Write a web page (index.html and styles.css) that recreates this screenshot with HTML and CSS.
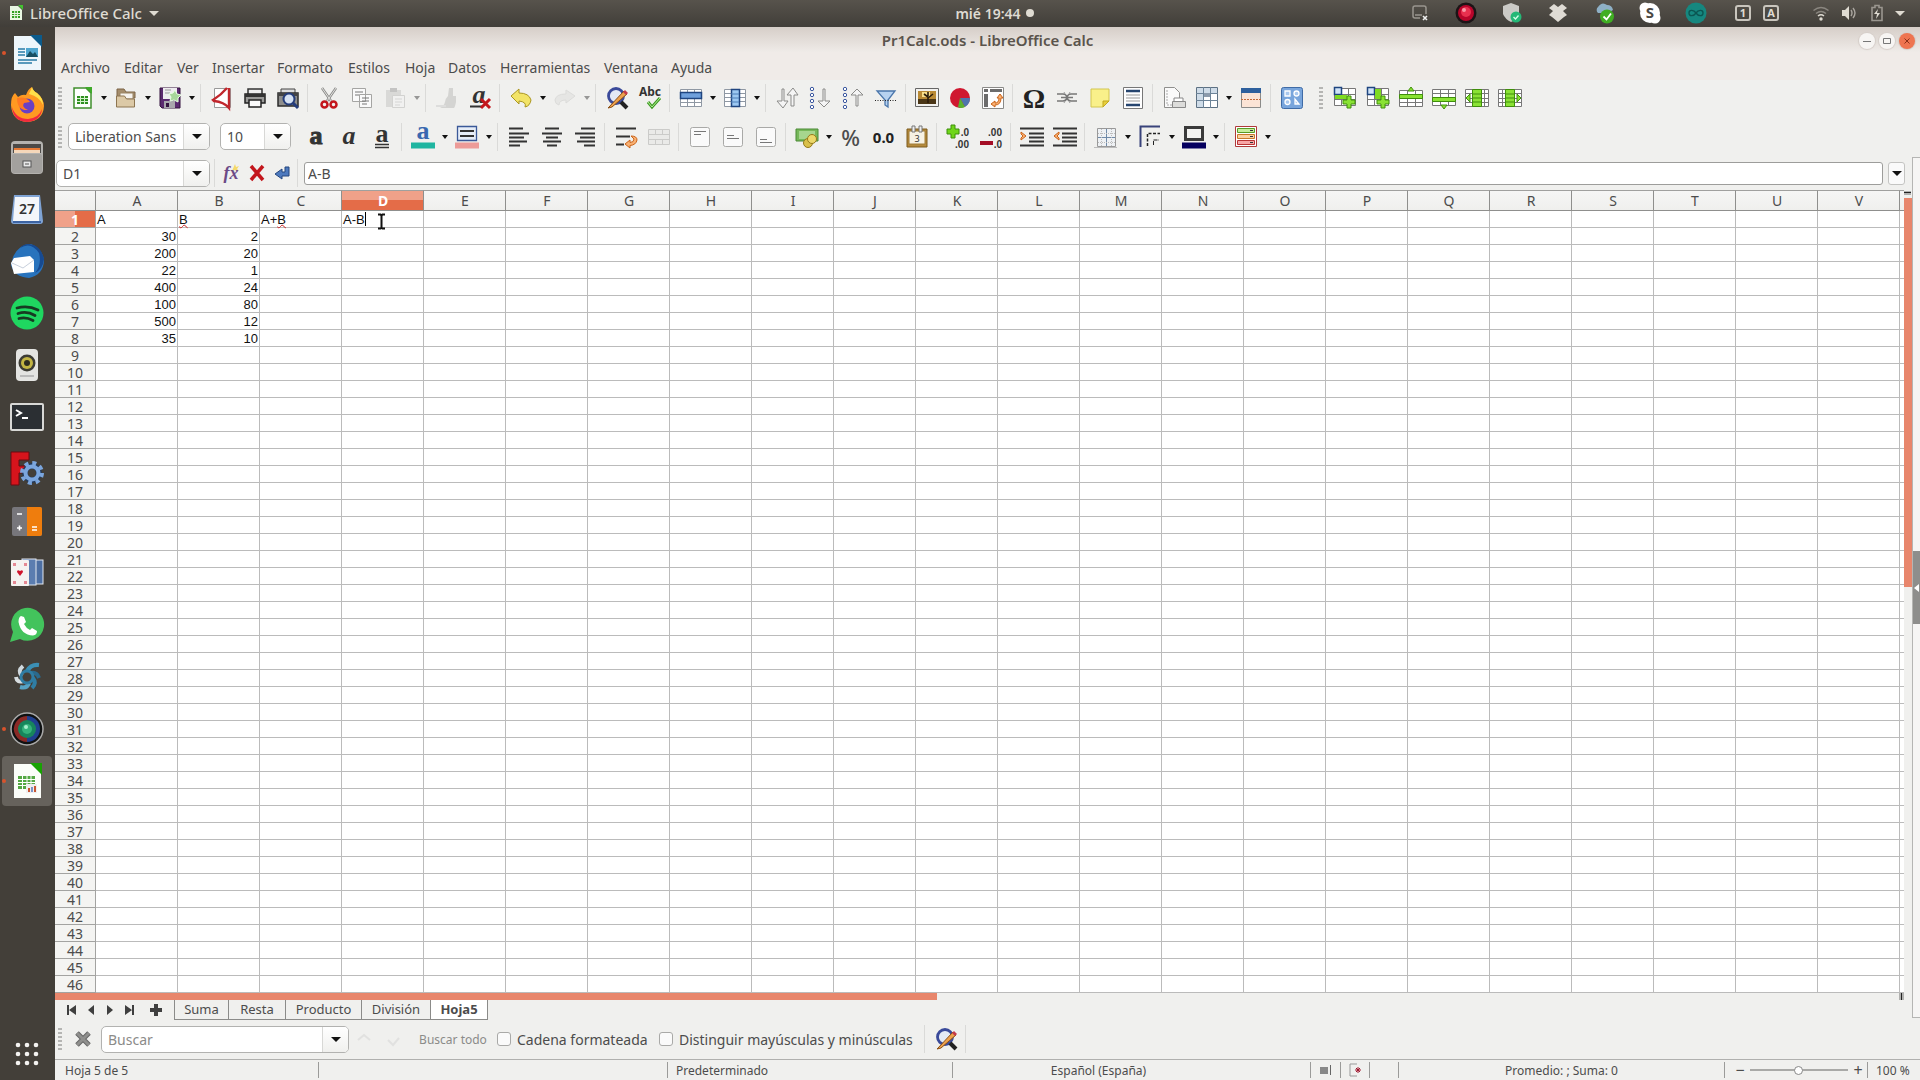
FILE: index.html
```html
<!DOCTYPE html>
<html lang="es">
<head>
    <meta charset="UTF-8">
    <meta name="viewport" content="width=device-width, initial-scale=1.0">
    <title>Pr1Calc.ods - LibreOffice Calc</title>
    <link rel="stylesheet" href="styles.css">
</head>
<body>
    <header class="topbar">
        <button class="app-menu">
            <svg width="14" height="16" viewBox="0 0 14 16"><path d="M1 1h8l4 4v10H1z" fill="#e9f7e3"/><path d="M9 0h5v5z" fill="#43c330"/><path d="M3 6h8v7H3z" fill="#2f9e1f"/><path d="M3 8.500h8M3 10.500h8M5.700 6v7M8.400 6v7" stroke="#e9f7e3"/></svg>
            LibreOffice Calc
            <span class="caret light"></span>
        </button>
        <div class="clock">mié 19:44 <span class="dot"></span></div>
        <div class="tray">
            <span class="slot"><svg width="18" height="18" viewBox="0 0 18 18"><path d="M9 14H4a2 2 0 0 1-2-2V4a2 2 0 0 1 2-2h9a2 2 0 0 1 2 2v6M4 11h7" fill="none" stroke="#99958e" stroke-width="1.500"/><path d="M12 12l4 4m0-4l-4 4" stroke="#eee" stroke-width="1.600"/></svg></span>
            <span class="slot"><svg width="22" height="22" viewBox="0 0 22 22"><circle cx="11" cy="11" r="10.500" fill="#1c1416"/><circle cx="11" cy="11" r="8" fill="#b8062b"/><circle cx="11" cy="10" r="5" fill="#e8304f"/><circle cx="9" cy="8" r="2" fill="#f799a8"/></svg></span>
            <span class="slot"><svg width="22" height="22" viewBox="0 0 22 22"><path d="M2 4l8-3 8 3v8q-2 6-8 8-6-3-8-8z" fill="#cbcac6"/><circle cx="15" cy="15" r="5.500" fill="#25b877"/><path d="M12.500 15l2 2 3-3.500" fill="none" stroke="#d6ffe9" stroke-width="1.300"/></svg></span>
            <span class="slot"><svg width="20" height="20" viewBox="0 0 20 20"><path d="M6 1l4 3 4-3 5 4-4 3 4 4-3 2-6 5-6-5-3-2 4-4-4-3z" fill="#dfdbd4"/></svg></span>
            <span class="slot"><svg width="22" height="22" viewBox="0 0 22 22"><path d="M5 11a4 4 0 0 1 0-6q4-6 9-2 5 0 6 5l-5 3z" fill="#8eb0c6"/><circle cx="14" cy="14.500" r="7" fill="#3fae22"/><path d="M10.500 14.500l3 3 4.500-6" fill="none" stroke="#fff" stroke-width="1.800"/></svg></span>
            <span class="slot"><svg width="22" height="22" viewBox="0 0 22 22"><circle cx="11" cy="11" r="10" fill="#fff"/><circle cx="6" cy="6" r="5.500" fill="#fff"/><circle cx="16" cy="16" r="5.500" fill="#fff"/><text x="11" y="16" text-anchor="middle" class="t-skype">S</text></svg></span>
            <span class="slot"><svg width="22" height="22" viewBox="0 0 22 22"><circle cx="11" cy="11" r="10.500" fill="#16877f"/><path d="M11 11c-2-3-7-4-7 0s5 3 7 0 7-4 7 0-5 3-7 0" fill="none" stroke="#0b5652" stroke-width="1.400"/></svg></span>
            <span class="slot narrow"><span class="keybox">1</span></span>
            <span class="slot narrow"><span class="keybox">A</span></span>
            <span class="slot narrow gap"><svg width="18" height="16" viewBox="0 0 18 16"><path d="M1.500 5.500q7.500-6 15 0M4 8.500q5-4 10 0" fill="none" stroke="#8b8780" stroke-width="1.500"/><path d="M6 11q3-2.500 6 0" fill="none" stroke="#dfdbd2" stroke-width="1.500"/><circle cx="9" cy="14" r="1.700" fill="#dfdbd2"/></svg></span>
            <span class="slot narrow"><svg width="16" height="16" viewBox="0 0 16 16"><path d="M1 5h3l4-4v14l-4-4H1z" fill="#dfdbd2"/><path d="M10 5q2 3 0 6M12 3q4 5 0 10" fill="none" stroke="#aaa69f" stroke-width="1.400"/></svg></span>
            <span class="slot narrow"><svg width="14" height="18" viewBox="0 0 14 18"><path d="M5 1.500h4v2h3v13H2v-13h3z" fill="none" stroke="#9a968f" stroke-width="1.600"/><path d="M8 5l-4 5h3l-1 5 4-6H7z" fill="#dfdbd2"/></svg></span>
            <span class="caret light"></span>
        </div>
    </header>

    <div class="desktop">
        <nav class="dock">
            <button class="dock-item running" aria-label="Writer"><svg viewBox="0 0 36 36"><path d="M5 1h18l9 9v25H5z" fill="#eef6fb"/><path d="M21 0h12v12z" fill="#0b5b8c"/><path d="M9 14h7M9 17h7M9 20h7M9 25h19M9 28h14" stroke="#2a7ca8" stroke-width="1.500"/><path d="M17 13h12v9H17z" fill="#4fa6cf"/><path d="M17 22l4-6 3 3 2-2 3 5z" fill="#174f63"/></svg></button>
            <button class="dock-item" aria-label="Firefox"><svg viewBox="0 0 36 36"><path d="M2 18Q2 9 6 6l3 4q4-3 8-2 2-6 6-8 1 4 5 6 7 6 7 13-1 15-17 16Q3 34 2 18z" fill="#ff9a22"/><path d="M3 20q4 12 16 12 11-1 14-10-1 12-15 13Q4 34 3 20z" fill="#f1293f"/><path d="M20 7q2-4 3-7 1 4 5 6 6 5 6 12-3-8-14-11z" fill="#ffe04a"/><circle cx="18" cy="19" r="7.500" fill="#6a3fc4"/><path d="M8 11q9-2 13 4l-6 1q-3 4 4 7-11 1-11-12z" fill="#ff7a22"/></svg></button>
            <button class="dock-item" aria-label="Archivos"><svg viewBox="0 0 36 36"><rect x="2" y="2" width="32" height="33" rx="4" fill="#b4b2af"/><path d="M4 5h28v9H4z" fill="#4c4946"/><path d="M5 9h26v5H5z" fill="#e77a35"/><path d="M5 11h26v3H5z" fill="#f5d7ba"/><rect x="3" y="15" width="30" height="19" rx="2" fill="#a3a19e"/><rect x="14" y="22" width="8" height="6" fill="#e8e8e8" stroke="#555"/><path d="M16 25h4" stroke="#555"/></svg></button>
            <button class="dock-item" aria-label="Calendario"><svg viewBox="0 0 36 36"><path d="M5 4h26l3 26q0 3-3 3H5q-3 0-3-3z" fill="#7fa3d4"/><path d="M6 6h24v24H4z" fill="#f4f6fa"/><path d="M4 30h28v2H4z" fill="#3d64a3"/><text x="18" y="23" text-anchor="middle" class="t-day">27</text></svg></button>
            <button class="dock-item" aria-label="Thunderbird"><svg viewBox="0 0 36 36"><path d="M4 14Q10 1 22 1q12 5 13 17-1 14-15 17Q5 34 2 22z" fill="#2873bd"/><path d="M11 5Q22-2 30 10q3 12-4 20 8-4 9-14Q32 2 20 1q-6 0-9 4z" fill="#174a91"/><path d="M2 20l3-5 16-2 4 4v12l-20 2z" fill="#fff"/><path d="M3 20l11 5 11-8" fill="none" stroke="#c8d0dc"/></svg></button>
            <button class="dock-item" aria-label="Spotify"><svg viewBox="0 0 36 36"><circle cx="18" cy="18" r="16.500" fill="#1fd760"/><path d="M8 13q11-3 21 2M9 18.500q9-3 17 2M10 23.500q7-2 14 2" fill="none" stroke="#173a22" stroke-width="2.800" stroke-linecap="round"/></svg></button>
            <button class="dock-item" aria-label="Rhythmbox"><svg viewBox="0 0 36 36"><rect x="7" y="2" width="22" height="32" rx="4" fill="#e4e4e2"/><circle cx="18" cy="16" r="8.500" fill="#3c3b34"/><circle cx="18" cy="16" r="6" fill="#c2b443"/><circle cx="18" cy="16" r="3" fill="#2d2b20"/><path d="M11 29h14" stroke="#bbb" stroke-width="2"/></svg></button>
            <button class="dock-item" aria-label="Terminal"><svg viewBox="0 0 36 36"><rect x="1" y="4" width="34" height="28" rx="2" fill="#d8d8d6"/><rect x="3" y="6" width="30" height="24" fill="#2b2f33"/><path d="M7 11l5 3-5 3M13 19h6" fill="none" stroke="#fff" stroke-width="2"/></svg></button>
            <button class="dock-item" aria-label="FreeCAD"><svg viewBox="0 0 36 36"><path d="M2 1h18v8H10v6h8v7h-8v12H2z" fill="#d6141c" stroke="#6b0b10"/><circle cx="23" cy="22" r="7" fill="none" stroke="#223a5c" stroke-width="6"/><circle cx="23" cy="22" r="10" fill="none" stroke="#7ba6de" stroke-width="4" stroke-dasharray="4 3.850"/><circle cx="23" cy="22" r="6.500" fill="none" stroke="#7ba6de" stroke-width="4"/></svg></button>
            <button class="dock-item" aria-label="Calculadora"><svg viewBox="0 0 36 36"><rect x="3" y="4" width="30" height="29" rx="2" fill="#77767b"/><path d="M18 4h13q2 0 2 2v25q0 2-2 2H18z" fill="#ef7d0d"/><path d="M8 11h5M8 25h5M10.500 22.500v5M23 24h5M23 27h5" stroke="#fff" stroke-width="1.600"/></svg></button>
            <button class="dock-item" aria-label="Solitario"><svg viewBox="0 0 36 36"><rect x="20" y="5" width="14" height="24" fill="#4d6fa3" stroke="#e3e8ef"/><rect x="13" y="4" width="14" height="26" fill="#5b7db0" stroke="#e3e8ef"/><rect x="2" y="5" width="18" height="26" rx="1" fill="#f4f2f0"/><path d="M11 21l-3-4q0-3 3-1 3-2 3 1z" fill="#d0142c"/><path d="M4 8h3v3H4zM15 8h3v3h-3zM4 26h3v3H4zM15 26h3v3h-3z" fill="#e48894"/></svg></button>
            <button class="dock-item" aria-label="WhatsApp"><svg viewBox="0 0 36 36"><path d="M1 35l3-10A16.500 16.500 0 1 1 11 32z" fill="#43c35c"/><path d="M12 9l3 1 2 5-2 2q2 4 6 6l2-2 5 3q0 4-4 4.500Q12 28 9.500 15q0-5 2.500-6z" fill="#fff"/></svg></button>
            <button class="dock-item" aria-label="Shutter"><svg viewBox="0 0 36 36"><g fill="none" stroke-width="4"><path d="M18 12Q22 5 30 6" stroke="#3b8fb4"/><path d="M22 14q6-1 8 5" stroke="#2a6a8d"/><path d="M24 19q4 5-1 10" stroke="#2f7da4"/><path d="M20 24q-2 6-9 4" stroke="#57a3c4"/><path d="M14 22q-6 2-7-4" stroke="#d7dde0"/><path d="M13 17Q8 12 14 7" stroke="#cfd8dd"/></g><circle cx="18" cy="18" r="6" fill="none" stroke="#2f7da4" stroke-width="3"/></svg></button>
            <button class="dock-item running" aria-label="Cámara"><svg viewBox="0 0 36 36"><circle cx="18" cy="18" r="16" fill="#0f1112" stroke="#aaa" stroke-width="1.500"/><path d="M7 11a13 13 0 0 1 11-6v26A13 13 0 0 1 7 11z" fill="#8a2a26"/><path d="M18 5a13 13 0 0 1 0 26z" fill="#20408f"/><circle cx="18" cy="18" r="9" fill="#17865c"/><circle cx="18" cy="18" r="5" fill="#35b37c"/><circle cx="17" cy="16" r="2" fill="#a8f0cd"/></svg></button>
            <button class="dock-item running active" aria-label="Calc"><svg viewBox="0 0 36 36"><path d="M5 1h18l9 9v25H5z" fill="#fbfdf9"/><path d="M21 0h12v12z" fill="#18a303"/><path d="M9 13h17v13H9z" fill="#54a843"/><path d="M9 16.500h17M9 19.500h17M9 22.500h17M13.500 13v13M18 13v13M22 13v13" stroke="#fff"/><path d="M17 21h11v9H17z" fill="#eee"/><path d="M19 29v-4h2v4zM25 29v-6h2v6z" fill="#c95632"/><path d="M22 29v-5h2v5z" fill="#7b93c6"/></svg></button>
            <button class="dock-item apps" aria-label="Mostrar aplicaciones"><svg viewBox="0 0 36 36" fill="#f4f3f1"><circle cx="9" cy="9" r="2.300"/><circle cx="18" cy="9" r="2.300"/><circle cx="27" cy="9" r="2.300"/><circle cx="9" cy="18" r="2.300"/><circle cx="18" cy="18" r="2.300"/><circle cx="27" cy="18" r="2.300"/><circle cx="9" cy="27" r="2.300"/><circle cx="18" cy="27" r="2.300"/><circle cx="27" cy="27" r="2.300"/></svg></button>
        </nav>

        <main class="window">
            <div class="titlebar">
                <h1>Pr1Calc.ods - LibreOffice Calc</h1>
                <div class="win-buttons">
                    <button aria-label="Minimizar"><svg viewBox="0 0 16 16"><path d="M4 8.500h8" stroke="#777"/></svg></button>
                    <button aria-label="Maximizar"><svg viewBox="0 0 16 16"><path d="M4.500 5.500h7v5h-7z" fill="none" stroke="#777"/></svg></button>
                    <button class="close" aria-label="Cerrar"><svg viewBox="0 0 16 16"><path d="M5.500 5.500l5 5m0-5l-5 5" stroke="#8a3019"/></svg></button>
                </div>
            </div>
            <nav class="menubar">
                <a href="#">Archivo</a><a href="#">Editar</a><a href="#">Ver</a><a href="#">Insertar</a><a href="#">Formato</a><a href="#">Estilos</a><a href="#">Hoja</a><a href="#">Datos</a><a href="#">Herramientas</a><a href="#">Ventana</a><a href="#">Ayuda</a>
            </nav>

            <div class="toolbar standard">
                <span class="grip"></span>
                <button class="tool" title="Nuevo"><svg viewBox="0 0 24 24"><path d="M4 2h12l5 5v15H4z" fill="#fff" stroke="#3f8f2d" stroke-width="1.500"/><path d="M15 1h7v7z" fill="#3faa2a"/><path d="M7 10h11v8H7z" fill="#2f8f20"/><path d="M7 12.500h11M7 15.500h11M10.500 10v8M14.500 10v8" stroke="#d5f3cd"/></svg></button><button class="drop" aria-label="Más"></button>
                <button class="tool" title="Abrir"><svg viewBox="0 0 24 24"><path d="M3 3h7l2 3h9v6H3z" fill="#a58d6c" stroke="#7c6546"/><path d="M6 7h13v6H6z" fill="#f6f3ee" stroke="#9a8565"/><path d="M2.500 21V10h8l2 3h8v8z" fill="#dcc9a6" stroke="#8d7550"/></svg></button><button class="drop" aria-label="Más"></button>
                <button class="tool" title="Guardar"><svg viewBox="0 0 24 24"><path d="M2 2h20v20H4l-2-2z" fill="#5b2a70" stroke="#34123f"/><path d="M5 2h14v11H5z" fill="#eeecf0"/><path d="M6 15h11v7H6z" fill="#a9a6ad"/><path d="M8 17h3v4H8z" fill="#34123f"/><path d="M7 4h6M7 7h5" stroke="#999"/><path d="M17 4l2 4 4 1-3 3v4l-4-2-4 1 1-4-2-3 4-1z" fill="#a8d79b" stroke="#e9ffe4"/></svg></button><button class="drop" aria-label="Más"></button>
                <span class="sep"></span>
                <button class="tool" title="Exportar a PDF"><svg viewBox="0 0 24 24"><path d="M4.500 2.500h16v19h-16z" fill="#fff" stroke="#999"/><path d="M17 2Q11 9 3 14l1 1q10 1 15 7V2" fill="none" stroke="#c1272d" stroke-width="2.400"/></svg></button>
                <button class="tool" title="Imprimir"><svg viewBox="0 0 24 24"><path d="M5 3h14v6H5z" fill="#eee" stroke="#333" stroke-width="1.500"/><path d="M2 8h20v9H2z" fill="#9a9a98" stroke="#222" stroke-width="1.500"/><path d="M2 8h20v3H2z" fill="#333"/><path d="M6 14h12v7H6z" fill="#fafafa" stroke="#222" stroke-width="1.500"/></svg></button>
                <button class="tool" title="Vista previa"><svg viewBox="0 0 24 24"><path d="M5 3h14v5H5z" fill="#ddd" stroke="#444"/><path d="M2 7h20v13H2z" fill="#8e8e8c" stroke="#2b2b2b" stroke-width="1.500"/><path d="M2 7h20v3H2z" fill="#444"/><circle cx="13" cy="13" r="5.500" fill="#d6e2f3" stroke="#243c7a" stroke-width="2"/><path d="M17 17l5 5" stroke="#243c7a" stroke-width="3"/></svg></button>
                <span class="sep"></span>
                <button class="tool" title="Cortar"><svg viewBox="0 0 24 24"><path d="M5 2l9 13M19 2l-9 13" stroke="#8a8a88" stroke-width="2.500"/><path d="M5 2l9 13M19 2l-9 13" stroke="#e3e3e1"/><circle cx="7.500" cy="18.500" r="3" fill="none" stroke="#c3161c" stroke-width="2.500"/><circle cx="16.500" cy="18.500" r="3" fill="none" stroke="#c3161c" stroke-width="2.500"/></svg></button>
                <button class="tool" title="Copiar"><svg viewBox="0 0 24 24"><path d="M2.500 2.500h13v13h-13zM9.500 8.500h12v13h-12z" fill="#fafafa" stroke="#a5a5a3"/><path d="M5 6h8M5 9h4M12 12h7M12 15h7M12 18h5" stroke="#777"/></svg></button>
                <button class="tool off" title="Pegar"><svg viewBox="0 0 24 24"><path d="M3 4h15v17H3z" fill="#c3c3c1"/><path d="M7 2h7v4H7z" fill="#999"/><path d="M9.500 9.500h12v12h-12z" fill="#f3f3f3" stroke="#b5b5b3"/><path d="M12 13h7M12 16h7M12 19h5" stroke="#bbb"/></svg></button><button class="drop off" aria-label="Más"></button>
                <span class="sep"></span>
                <button class="tool off" title="Clonar formato"><svg viewBox="0 0 24 24"><path d="M14 2h4v8h3v6q-1 5-2 6H5q4-2 5-6 0-3 3-6z" fill="#b9b9b7"/><path d="M1 20h10" stroke="#ccc" stroke-width="2"/></svg></button>
                <button class="tool" title="Limpiar formato"><svg viewBox="0 0 24 24"><text x="11" y="17" text-anchor="middle" class="t-glyph it">a</text><path d="M2 20.500h12" stroke="#333" stroke-width="2"/><path d="M13 13l9 9m0-9l-9 9" stroke="#c3161c" stroke-width="3"/></svg></button>
                <span class="sep"></span>
                <button class="tool" title="Deshacer"><svg viewBox="0 0 24 24"><path d="M2 10l8-7v4q10 0 12 7-1 6-6 7 2-5-6-6v3z" fill="#f3e467" stroke="#ab9620"/></svg></button><button class="drop" aria-label="Más"></button>
                <button class="tool off" title="Rehacer"><svg viewBox="0 0 24 24"><path d="M22 10l-9-6v4Q3 8 2 14q0 4 4 5 0-5 7-5v3z" fill="#dededc" stroke="#c9c9c7"/></svg></button><button class="drop off" aria-label="Más"></button>
                <span class="sep"></span>
                <button class="tool" title="Buscar y reemplazar"><svg viewBox="0 0 24 24"><circle cx="11" cy="10" r="7.500" fill="#e4eaf5" stroke="#3a4a9a" stroke-width="2.800"/><path d="M16 16l6 6" stroke="#222" stroke-width="4"/><path d="M4 21L19 5l3 3L7 21l-4 1z" fill="#eda14d" stroke="#8b4f14"/><path d="M18 6l2-2 3 3-2 2z" fill="#c33a4a"/></svg></button>
                <button class="tool" title="Ortografía"><svg viewBox="0 0 24 24"><text x="12" y="10" text-anchor="middle" class="t-abc">Abc</text><path d="M10 16l4 5 8-9" fill="none" stroke="#3b9a20" stroke-width="3"/><path d="M10 16l4 5 8-9" fill="none" stroke="#b7ee9c"/></svg></button>
                <span class="sep"></span>
                <button class="tool" title="Fila"><svg viewBox="0 0 24 24"><path d="M1.500 3.500h21v17h-21z" fill="#fff" stroke="#8f98a3"/><path d="M1.500 16.500h21M8.500 3.500v17M15.500 3.500v17" stroke="#8f98a3"/><path d="M1.500 6.500h21v6h-21z" fill="#6fa0dc" stroke="#1f4580" stroke-width="1.500"/></svg></button><button class="drop" aria-label="Más"></button>
                <button class="tool" title="Columna"><svg viewBox="0 0 24 24"><path d="M1.500 3.500h21v17h-21z" fill="#fff" stroke="#8f98a3"/><path d="M1.500 7.500h21M1.500 11.500h21M1.500 15.500h21" stroke="#8f98a3"/><path d="M8.500 3.500h8v17h-8z" fill="#9cc8f2" stroke="#1f4580" stroke-width="1.500"/><path d="M8 8h8M8 12h8M8 16h8" stroke="#4d7fb8"/></svg></button><button class="drop" aria-label="Más"></button>
                <span class="sep"></span>
                <button class="tool" title="Ordenar"><svg viewBox="0 0 24 24"><path d="M7 3h2v12h4l-5 7-6-7h5zM16 20V9h-4l6-7 5 7h-4v11z" fill="#f5f5f5" stroke="#8b8b89"/></svg></button>
                <button class="tool" title="Orden ascendente"><svg viewBox="0 0 24 24"><g fill="#fff" stroke="#3a57a0"><circle cx="4" cy="3" r="1.700"/><circle cx="4" cy="9" r="1.700"/><circle cx="4" cy="15" r="1.700"/><circle cx="4" cy="21" r="1.700"/></g><path d="M15 3h2v12h5l-6 6-6-6h5z" fill="#f5f5f5" stroke="#8b8b89"/></svg></button>
                <button class="tool" title="Orden descendente"><svg viewBox="0 0 24 24"><g fill="#fff" stroke="#3a57a0"><circle cx="4" cy="3" r="1.700"/><circle cx="4" cy="9" r="1.700"/><circle cx="4" cy="15" r="1.700"/><circle cx="4" cy="21" r="1.700"/></g><path d="M15 20h2V9h5l-6-6-6 6h5z" fill="#f5f5f5" stroke="#8b8b89"/></svg></button>
                <button class="tool" title="Filtro"><svg viewBox="0 0 24 24"><path d="M3 5h18l-7 9v7l-3-2v-5z" fill="#b7d2f0" stroke="#4a76ab" stroke-width="1.300"/><path d="M1 14.500h22" stroke="#222" stroke-dasharray="1 1.500"/></svg></button>
                <span class="sep"></span>
                <button class="tool" title="Imagen"><svg viewBox="0 0 24 24"><path d="M.5 2.500h23v18H.5z" fill="#f1f1ef" stroke="#666"/><path d="M3 5h18v13H3z" fill="#b98a35"/><path d="M3 13h18v5H3z" fill="#4a3616"/><path d="M7 6h8v5H7z" fill="#f8df8c"/><path d="M13 17v-6l-4-3m4 4l5-4m-5 2V6" fill="none" stroke="#2b1c0a" stroke-width="1.600"/></svg></button>
                <button class="tool" title="Gráfico"><svg viewBox="0 0 24 24"><circle cx="12" cy="12" r="10" fill="#cf1830"/><path d="M12 12h10q0 6-5 9z" fill="#4e74ad"/><path d="M12 12l5 9q-4 2-7 0z" fill="#59b32f"/></svg></button>
                <button class="tool" title="Tabla dinámica"><svg viewBox="0 0 24 24"><path d="M1.500 1.500h21v21h-21z" fill="#fff" stroke="#8a8a88"/><path d="M3 3h4v3H3zM9 3h12v3H9zM3 8h4v13H3z" fill="#6c6c6c"/><path d="M10 18l4-3v2q4 0 4-5h-2l3-4 3 4h-2q0 7-6 7v2z" fill="#f9b173" stroke="#cb6318"/></svg></button>
                <span class="sep"></span>
                <button class="tool" title="Símbolo"><svg viewBox="0 0 24 24"><text x="12" y="22" text-anchor="middle" class="t-omega">Ω</text></svg></button>
                <button class="tool" title="Hiperenlace"><svg viewBox="0 0 24 24"><path d="M2 8h6q3 0 4 3 1-3 4-3h6M2 15h6q3 0 4-3 1 3 4 3h6M6 11.500h12" fill="none" stroke="#777" stroke-width="1.600"/><path d="M9 6l1 2M15 6l-1 2M9 17l1-2M15 17l-1-2" stroke="#999"/></svg></button>
                <button class="tool" title="Comentario"><svg viewBox="0 0 24 24"><path d="M3 3h18v12l-6 6H3z" fill="#f9f08a" stroke="#d3c651"/><path d="M21 15h-6v6z" fill="#e7cf3c" stroke="#c2a81f"/></svg></button>
                <button class="tool" title="Cabeceras"><svg viewBox="0 0 24 24"><path d="M2.500 1.500h19v21h-19z" fill="#fff" stroke="#777"/><path d="M5 5h14M5 19h14" stroke="#26456f" stroke-width="2.500"/><path d="M5 9h14M5 12h14M5 15h14" stroke="#999"/></svg></button>
                <span class="sep"></span>
                <button class="tool" title="Área de impresión"><svg viewBox="0 0 24 24"><path d="M2.500 1.500h10l5 5v15h-15z" fill="#fafafa" stroke="#8f8f8d"/><path d="M5 4v15h8" fill="none" stroke="#aaa" stroke-dasharray="2 1"/><path d="M12 12h9v4h-9z" fill="#fff" stroke="#888"/><path d="M10.500 15.500h13v6h-13z" fill="#dcdcda" stroke="#888"/></svg></button>
                <button class="tool" title="Inmovilizar"><svg viewBox="0 0 24 24"><path d="M1.500 1.500h21v20h-21z" fill="#fff" stroke="#5d7183"/><path d="M2 2h20v5H8v14H2z" fill="#cfdce8"/><path d="M1 14.500h22M15.500 1v21M1 7.500h22M8.500 1v21" stroke="#6d8498"/><path d="M9 7h6v4H9z" fill="#8c9bac"/></svg></button><button class="drop" aria-label="Más"></button>
                <button class="tool" title="Dividir ventana"><svg viewBox="0 0 24 24"><path d="M2.500 2.500h19v19h-19z" fill="#fbe4d6" stroke="#8b8b89"/><path d="M2 2h20v5H2z" fill="#2e609d"/><path d="M2 13.500h20" stroke="#c26a3a" stroke-dasharray="2 1"/></svg></button>
                <span class="sep"></span>
                <button class="tool" title="Dibujo"><svg viewBox="0 0 24 24"><rect x="1.500" y="1.500" width="21" height="21" rx="2" fill="#78a5dc" stroke="#3f6ba6"/><g fill="#a9c8ee" stroke="#fff" stroke-width="1.300"><path d="M5 5h5v5H5zM15 18v-5l4 5z"/><circle cx="16.500" cy="7.500" r="2.500"/><circle cx="7.500" cy="16" r="2.500"/></g></svg></button>
                <span class="grip second"></span>
                <button class="tool" title="Insertar filas"><svg viewBox="0 0 24 24"><path d="M1.500 2.500h21v17h-21z" fill="#fff" stroke="#777"/><path d="M1 8.500h21M1 13.500h21M8.500 2v17M15.500 2v17" stroke="#777"/><path d="M1.500 1.500h7v7h-7z" fill="#cfe3f7" stroke="#1f4580" stroke-width="1.500"/><path d="M2 9h12v4H2z" fill="#7edb21"/><path d="M14 10h4v4h4v4h-4v4h-4v-4h-4v-4h4z" fill="#8ae234" stroke="#3f8f0a"/></svg></button>
                <button class="tool" title="Insertar columnas"><svg viewBox="0 0 24 24"><path d="M1.500 2.500h21v17h-21z" fill="#fff" stroke="#777"/><path d="M1 8.500h21M1 13.500h21M8.500 2v17M15.500 2v17" stroke="#777"/><path d="M1.500 1.500h7v7h-7z" fill="#cfe3f7" stroke="#1f4580" stroke-width="1.500"/><path d="M9 3h6v10H9z" fill="#7edb21"/><path d="M15 10h4v4h4v4h-4v4h-4v-4h-4v-4h4z" fill="#8ae234" stroke="#3f8f0a"/></svg></button>
                <button class="tool" title="Fila encima"><svg viewBox="0 0 24 24"><path d="M.5 4.500h23v16H.5z" fill="#fff" stroke="#777"/><path d="M0 16.500h24M8.500 4v17M16.500 4v17" stroke="#777"/><path d="M.5 8.500h23v4H.5zM12 1l3 4H9z" fill="#8ae234" stroke="#3f8f0a"/></svg></button>
                <button class="tool" title="Fila debajo"><svg viewBox="0 0 24 24"><path d="M.5 3.500h23v16H.5z" fill="#fff" stroke="#777"/><path d="M0 7.500h24M8.500 3v17M16.500 3v17" stroke="#777"/><path d="M.5 11.500h23v4H.5zM12 23l3-4H9z" fill="#8ae234" stroke="#3f8f0a"/></svg></button>
                <button class="tool" title="Columna antes"><svg viewBox="0 0 24 24"><path d="M.5 3.500h23v17H.5z" fill="#fff" stroke="#777"/><path d="M0 7.500h24M0 12.500h24M0 16.500h24M19.500 3v17" stroke="#777"/><path d="M7.500 3.500h9v17h-9zM1 12l4-4v8z" fill="#8ae234" stroke="#3f8f0a"/><path d="M8 8h8M8 12h8M8 16h8" stroke="#3f8f0a"/></svg></button>
                <button class="tool" title="Columna después"><svg viewBox="0 0 24 24"><path d="M.5 3.500h23v17H.5z" fill="#fff" stroke="#777"/><path d="M0 7.500h24M0 12.500h24M0 16.500h24M4.500 3v17" stroke="#777"/><path d="M7.500 3.500h9v17h-9zM23 12l-4-4v8z" fill="#8ae234" stroke="#3f8f0a"/><path d="M8 8h8M8 12h8M8 16h8" stroke="#3f8f0a"/></svg></button>
            </div>

            <div class="toolbar formatting">
                <span class="grip"></span>
                <div class="combo font-name"><input type="text" value="Liberation Sans" aria-label="Nombre del tipo de letra"><button aria-label="Abrir lista"><span class="caret"></span></button></div>
                <div class="combo font-size"><input type="text" value="10" aria-label="Tamaño"><button aria-label="Abrir lista"><span class="caret"></span></button></div>
                <button class="tool" title="Negrita"><svg viewBox="0 0 24 24"><text x="12" y="19" text-anchor="middle" class="t-glyph heavy">a</text></svg></button>
                <button class="tool" title="Cursiva"><svg viewBox="0 0 24 24"><text x="12" y="19" text-anchor="middle" class="t-glyph it">a</text></svg></button>
                <button class="tool" title="Subrayado"><svg viewBox="0 0 24 24"><text x="12" y="17" text-anchor="middle" class="t-glyph">a</text><path d="M5 19.500h14M5 22.500h14" stroke="#333" stroke-width="1.500"/></svg></button>
                <span class="sep"></span>
                <button class="tool" title="Color de letra"><svg viewBox="0 0 24 24"><text x="12" y="14" text-anchor="middle" class="t-glyph blue">a</text><path d="M0 17.500h24v6H0z" fill="#1fb5a0"/></svg></button><button class="drop" aria-label="Más"></button>
                <button class="tool" title="Color de fondo"><svg viewBox="0 0 24 24"><path d="M2.500 1.500h19v14h-19z" fill="#e6edf7" stroke="#3b5998" stroke-width="1.300"/><path d="M5 6h14M5 11h14" stroke="#333" stroke-width="2"/><path d="M0 17.500h24v6H0z" fill="#ec9b98"/></svg></button><button class="drop" aria-label="Más"></button>
                <span class="sep"></span>
                <button class="tool" title="Izquierda"><svg viewBox="0 0 24 24"><path d="M2 3.500h14M2 8.500h20M2 12.500h15M2 16.500h18M2 20.500h11" stroke="#333" stroke-width="2.200"/></svg></button>
                <button class="tool" title="Centrar"><svg viewBox="0 0 24 24"><path d="M5 3.500h14M2 8.500h20M6 12.500h12M3 16.500h18M7 20.500h10" stroke="#333" stroke-width="2.200"/></svg></button>
                <button class="tool" title="Derecha"><svg viewBox="0 0 24 24"><path d="M8 3.500h14M2 8.500h20M7 12.500h15M4 16.500h18M11 20.500h11" stroke="#333" stroke-width="2.200"/></svg></button>
                <span class="sep"></span>
                <button class="tool" title="Ajustar texto"><svg viewBox="0 0 24 24"><path d="M2 3.500h20M2 11.500h14M2 19.500h8" stroke="#333" stroke-width="2.200"/><path d="M11 19l5-4v2.500q4 0 4-3.500l-3-3q6 0 6 4-1 5-7 5.500V23z" fill="#f9b173" stroke="#cb6318"/></svg></button>
                <button class="tool off" title="Combinar celdas"><svg viewBox="0 0 24 24"><path d="M1.500 4.500h21v15h-21zM1 9.500h22M1 14.500h22M8.500 5v4M15.500 5v4M8.500 15v4M15.500 15v4" fill="#e5e5e3" stroke="#a8a8a6"/></svg></button>
                <span class="sep"></span>
                <button class="tool" title="Arriba"><svg viewBox="0 0 24 24"><rect x="2.500" y="2.500" width="19" height="19" rx="2" fill="#fafafa" stroke="#a9a9a7"/><path d="M6 6.500h12M6 9.500h7" stroke="#777"/></svg></button>
                <button class="tool" title="Centro"><svg viewBox="0 0 24 24"><rect x="2.500" y="2.500" width="19" height="19" rx="2" fill="#fafafa" stroke="#a9a9a7"/><path d="M6 10.500h7M6 13.500h12" stroke="#777"/></svg></button>
                <button class="tool" title="Abajo"><svg viewBox="0 0 24 24"><rect x="2.500" y="2.500" width="19" height="19" rx="2" fill="#fafafa" stroke="#a9a9a7"/><path d="M6 14.500h7M6 17.500h12" stroke="#777"/></svg></button>
                <span class="sep"></span>
                <button class="tool" title="Moneda"><svg viewBox="0 0 24 24"><path d="M1 4h22v12H1z" fill="#76b85a" stroke="#4a8a35"/><path d="M4 6h16v8H4z" fill="#a6d68e"/><circle cx="13" cy="18" r="4.500" fill="#d9c04a" stroke="#94791a"/><circle cx="17" cy="14" r="4.500" fill="#ecd86a" stroke="#94791a"/></svg></button><button class="drop" aria-label="Más"></button>
                <button class="tool glyph pct">%</button>
                <button class="tool glyph num">0.0</button>
                <button class="tool" title="Fecha"><svg viewBox="0 0 24 24"><path d="M2 4h20v18H2z" fill="#b58a3c" stroke="#7c5a1c"/><path d="M4 6h16v13H4z" fill="#f7f2e4" stroke="#a07c37"/><path d="M7 1h3v6H7zM14 1h3v6h-3z" fill="#eee" stroke="#777"/><text x="12" y="17" text-anchor="middle" class="t-tiny">3</text></svg></button>
                <span class="sep"></span>
                <button class="tool" title="Añadir decimal"><svg viewBox="0 0 24 24"><path d="M5 0h4v4h4v5H9v4H5V9H1V4h4z" fill="#6fd61a" stroke="#3f8f0a"/><text x="23" y="11" text-anchor="end" class="t-dec">.0</text><text x="23" y="23" text-anchor="end" class="t-dec">.00</text></svg></button>
                <button class="tool" title="Quitar decimal"><svg viewBox="0 0 24 24"><path d="M1 16h13v4H1z" fill="#a40d25"/><text x="23" y="11" text-anchor="end" class="t-dec">.00</text><text x="23" y="23" text-anchor="end" class="t-dec">.0</text></svg></button>
                <span class="sep"></span>
                <button class="tool" title="Aumentar sangría"><svg viewBox="0 0 24 24"><path d="M0 3.500h24M9 8.500h15M9 12.500h15M9 16.500h15M0 20.500h24" stroke="#333" stroke-width="2"/><path d="M1 7l5 4-5 4v-2l2-2-2-2z" fill="#f9b173" stroke="#cb6318"/></svg></button>
                <button class="tool" title="Reducir sangría"><svg viewBox="0 0 24 24"><path d="M0 3.500h24M9 8.500h15M9 12.500h15M9 16.500h15M0 20.500h24" stroke="#333" stroke-width="2"/><path d="M6 7l-5 4 5 4v-2l-2-2 2-2z" fill="#f9b173" stroke="#cb6318"/></svg></button>
                <span class="sep"></span>
                <button class="tool" title="Bordes"><svg viewBox="0 0 24 24"><path d="M3.500 3.500h18v18h-18z" fill="#eef1f4" stroke="#999"/><path d="M12.500 4v17M4 12.500h17" stroke="#6f8aa8"/><path d="M7.500 4v17M17.500 4v17M4 8.500h17M4 17.500h17" stroke="#bbb" stroke-dasharray="1 1"/><path d="M0 22.500h23" stroke="#bbb"/></svg></button><button class="drop" aria-label="Más"></button>
                <button class="tool" title="Estilo de borde"><svg viewBox="0 0 24 24"><path d="M2.500 22V1.500H22" fill="none" stroke="#39437a" stroke-width="2"/><path d="M9.500 21V8.500H22" fill="none" stroke="#222" stroke-width="1.500" stroke-dasharray="3 1.500"/><path d="M15.500 20v-5H21" fill="none" stroke="#222" stroke-dasharray="4 1"/></svg></button><button class="drop" aria-label="Más"></button>
                <button class="tool" title="Color de borde"><svg viewBox="0 0 24 24"><path d="M3.500 2.500h17v12h-17z" fill="#f3f3f1" stroke="#3a3a3a" stroke-width="3"/><path d="M0 17.500h24v6H0z" fill="#06005f"/></svg></button><button class="drop" aria-label="Más"></button>
                <span class="sep"></span>
                <button class="tool" title="Formato condicional"><svg viewBox="0 0 24 24"><path d="M1.500 1.500h21v20h-21z" fill="#fff" stroke="#b03a3a"/><path d="M3.500 3.500h17v4h-17z" fill="#c6ef9d" stroke="#5a9a25"/><path d="M3.500 9.500h17v4h-17z" fill="#fbd1a0" stroke="#c77a2a"/><path d="M3.500 15.500h17v4h-17z" fill="#f7a6a6" stroke="#b83434"/><path d="M16 5.500h3M16 11.500h3M16 17.500h3" stroke="#333"/></svg></button><button class="drop" aria-label="Más"></button>
            </div>

            <div class="workspace">
                <div class="document">
                    <div class="formula-bar">
                        <div class="combo name-box"><input type="text" value="D1" aria-label="Cuadro de nombre"><button aria-label="Abrir lista"><span class="caret"></span></button></div>
                        <span class="sep"></span>
                        <button class="mini" title="Asistente de funciones"><svg viewBox="0 0 20 20"><path d="M13 1l1 3 3-1-2 3 2 2-4-1-3 1z" fill="#f5d96a"/><text x="9" y="16" text-anchor="middle" class="t-fx">fx</text></svg></button>
                        <button class="mini" title="Cancelar"><svg viewBox="0 0 20 20"><path d="M4 3l12 14M16 3L4 17" stroke="#c3161c" stroke-width="3.500"/></svg></button>
                        <button class="mini" title="Aceptar"><svg viewBox="0 0 20 20"><path d="M13 4h4v9h-7v3l-7-5 7-5v3h3z" fill="#4d79bd" stroke="#25477f"/></svg></button>
                        <span class="sep"></span>
                        <input class="formula" type="text" value="A-B" aria-label="Línea de entrada">
                        <button class="expand" aria-label="Expandir"><span class="caret"></span></button>
                    </div>
                    <div class="sheet-row">
                        <div class="sheet">
                            <table class="grid">
                                <thead><tr id="cols"></tr></thead>
                                <tbody id="rows"></tbody>
                            </table>
                            <svg class="ibeam" width="9" height="17" viewBox="0 0 9 17"><path d="M1 1.500h2.500l1 1 1-1H8M4.500 2v13M1 15.500h2.500l1-1 1 1H8" fill="none" stroke="#111" stroke-width="2"/></svg>
                        </div>
                        <div class="vscroll"><i></i><span></span></div>
                    </div>
                    <div class="hscroll"><span></span><i></i></div>
                    <div class="tabs">
                        <button class="nav" aria-label="Primera hoja"><svg viewBox="0 0 10 10"><path d="M0 0h2v10H0zM9 0v10L2 5z"/></svg></button>
                        <button class="nav" aria-label="Hoja anterior"><svg viewBox="0 0 10 10"><path d="M8 0v10L2 5z"/></svg></button>
                        <button class="nav" aria-label="Hoja siguiente"><svg viewBox="0 0 10 10"><path d="M2 0v10l6-5z"/></svg></button>
                        <button class="nav" aria-label="Última hoja"><svg viewBox="0 0 10 10"><path d="M8 0h2v10H8zM1 0v10l7-5z"/></svg></button>
                        <button class="add" aria-label="Añadir hoja"><svg viewBox="0 0 12 12"><path d="M4 0h4v4h4v4H8v4H4V8H0V4h4z"/></svg></button>
                        <button class="tab suma">Suma</button>
                        <button class="tab resta">Resta</button>
                        <button class="tab producto">Producto</button>
                        <button class="tab division">División</button>
                        <button class="tab current">Hoja5</button>
                    </div>
                </div>
                <aside class="sidebar"><button aria-label="Mostrar barra lateral"></button></aside>
            </div>

            <div class="findbar">
                <span class="grip"></span>
                <button class="mini close" title="Cerrar"><svg viewBox="0 0 20 20"><path d="M4 4l12 12M16 4L4 16" stroke="#666" stroke-width="5"/><path d="M4 4l12 12M16 4L4 16" stroke="#8f8f8d" stroke-width="3"/></svg></button>
                <div class="combo search"><input type="text" placeholder="Buscar" aria-label="Buscar"><button aria-label="Abrir lista"><span class="caret"></span></button></div>
                <button class="mini faint" title="Anterior"><svg viewBox="0 0 20 20"><path d="M4 11l6-5 6 5" fill="none" stroke="#aaa" stroke-width="2"/></svg></button>
                <button class="mini faint" title="Siguiente"><svg viewBox="0 0 20 20"><path d="M4 11l5 5 6-7" fill="none" stroke="#aaa" stroke-width="2"/></svg></button>
                <button class="find-all">Buscar todo</button>
                <label class="formatted"><input type="checkbox"> Cadena formateada</label>
                <label class="case"><input type="checkbox"> Distinguir mayúsculas y minúsculas</label>
                <span class="sep"></span>
                <button class="tool" title="Buscar y reemplazar"><svg viewBox="0 0 24 24"><circle cx="11" cy="10" r="7.500" fill="#e4eaf5" stroke="#3a4a9a" stroke-width="2.800"/><path d="M16 16l6 6" stroke="#222" stroke-width="4"/><path d="M4 21L19 5l3 3L7 21l-4 1z" fill="#eda14d" stroke="#8b4f14"/><path d="M18 6l2-2 3 3-2 2z" fill="#c33a4a"/></svg></button>
                <span class="sep"></span>
            </div>

            <footer class="statusbar">
                <span>Hoja 5 de 5</span>
                <span></span>
                <span>Predeterminado</span>
                <span class="center language">Español (España)</span>
                <span class="center"><svg width="12" height="12" viewBox="0 0 12 12"><path d="M0 3h8v7H0z" fill="#888"/><path d="M10.500 1v10" stroke="#666"/></svg></span>
                <span class="center"><svg width="12" height="14" viewBox="0 0 12 14"><path d="M8 1H1v12h7" fill="none" stroke="#999"/><path d="M9 4v6M6 7h6M7 5l4 4m0-4L7 9" stroke="#a0142c"/></svg></span>
                <span></span>
                <span class="center">Promedio: ; Suma: 0</span>
                <span class="zoom"><button aria-label="Reducir">−</button><input type="range" min="0" max="100" value="49" aria-label="Escala"><button aria-label="Ampliar">+</button></span>
                <span>100 %</span>
            </footer>
        </main>
    </div>
    <script src="sheet.js"></script>
</body>
</html>
```
FILE: styles.css
```css
* { box-sizing: border-box; }
body { margin: 0; min-height: 100vh; display: flex; flex-direction: column; background: #f0f0ee; color: #4c4c4c; font-family: 'Noto Sans', 'Open Sans', sans-serif; font-size: 14px; overflow: hidden; }
button, input { font: inherit; color: inherit; margin: 0; padding: 0; border: none; background: none; }
button { display: flex; align-items: center; justify-content: center; }
a { color: inherit; text-decoration: none; }
svg { display: block; flex: none; }
.caret { display: inline-block; border: 5px solid transparent; border-top: 5px solid #111; border-bottom: none; }
.caret.light { border-top-color: #dfdbd2; }

/* Ubuntu top bar */
.topbar { display: grid; grid-template-columns: 1fr auto 1fr; align-items: center; height: 27px; padding-bottom: 1px; background: linear-gradient(#57534c, #413e39); color: #dfdbd2; }
.app-menu { gap: 7px; padding-left: 9px; justify-self: start; font-size: 15px; font-weight: 500; line-height: 20px; }
.clock { display: flex; align-items: center; gap: 5px; padding-left: 69px; font-weight: 600; }
.dot { width: 8px; height: 8px; border-radius: 50%; background: #dfdbd2; }
.tray { display: flex; align-items: center; justify-content: flex-end; padding-right: 15px; }
.slot { width: 46px; display: flex; justify-content: center; }
.slot.narrow { width: 28px; }
.slot.gap { margin-left: 22px; }
.slot:nth-child(7) { margin-right: 10px; }
.tray .caret { margin-left: 4px; }
.keybox { width: 16px; height: 16px; border: 2px solid #c9c5bd; border-radius: 3px; font: bold 11px/12px 'Noto Sans', sans-serif; text-align: center; }

/* dock */
.desktop { flex: 1; display: flex; }
.dock { width: 55px; padding-right: 2px; display: flex; flex-direction: column; align-items: center; background: #433f39; }
.dock-item { position: relative; width: 50px; height: 50px; margin: 1px 0; border-radius: 4px; }
.dock-item svg { width: 36px; height: 36px; }
.dock-item.active { background: #66625c; }
.dock-item.running::before { content: ''; position: absolute; left: 0; top: 23px; width: 4px; height: 4px; border-radius: 50%; background: #d8532c; }
.dock-item.apps { margin-top: auto; }

/* window */
.window { flex: 1; min-width: 0; display: flex; flex-direction: column; background: #f0f0ee; }
.titlebar { position: relative; height: 25px; display: flex; align-items: center; justify-content: center; padding-top: 1px; background: linear-gradient(#d6cec8, #efebe8); }
.titlebar h1 { margin: 0; font-size: 15px; line-height: 20px; font-weight: 600; color: #5a534c; }
.win-buttons { position: absolute; right: 5px; top: 6px; display: flex; gap: 4px; }
.win-buttons button { width: 16px; height: 16px; border-radius: 50%; background: #f7f5f3; box-shadow: 0 0 1px 1px #d5cdc8; }
.win-buttons button.close { background: #ee7450; }
.win-buttons svg { width: 16px; height: 16px; }
.menubar { display: grid; grid-template-columns: 63px 53px 35px 65px 71px 57px 43px 52px 104px 67px 1fr; height: 28px; padding: 6px 0 0 6px; line-height: 20px; background: #f0ebe8; }

.toolbar { display: flex; align-items: center; height: 37px; padding-bottom: 1px; }
.toolbar.formatting { height: 38px; padding: 1px 0 0; }
.grip { width: 4px; height: 22px; margin: 0 3px; background: repeating-linear-gradient(#b5b5b3 0 2px, transparent 2px 4px); }
.grip.second { margin: 0 5px 0 11px; }
.tool { width: 33px; height: 30px; font-weight: 600; }
.tool svg { width: 24px; height: 24px; overflow: visible; }
.tool.off { opacity: 0.5; }
.drop { width: 11px; height: 30px; }
.drop::before { content: ''; border: 3px solid transparent; border-top: 4px solid #111; border-bottom: none; }
.drop.off { opacity: 0.4; }
.sep { width: 1px; height: 28px; margin: 0 4px 0 3px; background: #dadad8; }
.glyph.pct { font-size: 22px; font-weight: 500; }
.glyph.num { font-size: 15px; font-weight: 700; color: #222; }

.combo { display: flex; height: 27px; border: 1px solid #b2b2b0; border-radius: 5px; background: #fff; overflow: hidden; }
.combo input { flex: 1; min-width: 0; padding-left: 6px; }
.combo button { width: 26px; background: linear-gradient(#fff, #f0f0ee); border-left: 1px solid #d8d8d6; }
.font-name { width: 142px; margin: 0 10px 0 3px; }
.font-size { width: 71px; margin-right: 8px; }

/* svg lettering */
text { font-family: 'Noto Sans', sans-serif; font-weight: 700; fill: #333; }
.t-skype { font-size: 15px; fill: #4b4843; }
.t-day { font-size: 14px; font-weight: 600; }
.t-glyph { font: 700 26px 'Liberation Serif', serif; }
.t-glyph.heavy { stroke: #333; }
.t-glyph.it { font-style: italic; }
.t-glyph.blue { fill: #3a68b0; }
.t-abc { font-size: 12px; }
.t-omega { font: 700 28px 'Liberation Serif', serif; fill: #222; }
.t-tiny { font-size: 9px; font-weight: 400; }
.t-dec { font: 700 10px 'Liberation Sans', sans-serif; }
.t-fx { font: italic 700 18px 'Liberation Serif', serif; fill: #6c4a86; }

/* formula bar and sheet */
.workspace { flex: 1; display: flex; min-height: 0; }
.document { flex: 1; min-width: 0; display: flex; flex-direction: column; }
.formula-bar { display: flex; align-items: center; height: 35px; padding: 1px 7px 0 1px; }
.name-box { width: 154px; margin-right: 1px; }
.mini { width: 25px; height: 26px; }
.mini svg { width: 20px; height: 20px; overflow: visible; }
.formula { flex: 1; height: 23px; margin-left: 2px; padding-left: 3px; border: 1px solid #9d9d9b; border-radius: 3px; background: #fff; }
.expand { width: 17px; height: 23px; margin-left: 5px; border: 1px solid #c4c4c2; border-radius: 3px; background: #fafafa; }
.sheet-row { display: flex; }
.sheet { position: relative; flex: 1; min-width: 0; overflow: hidden; background: #fff; }
.grid { width: 100%; table-layout: fixed; border-collapse: separate; border-spacing: 0; }
.grid th { height: 17px; padding: 1px 0 0; border: solid #a3a3a1; border-width: 0 1px 1px 0; background: #f4f4f2; font-weight: 400; font-size: 14px; line-height: 15px; text-align: center; }
.grid thead th { width: 82px; height: 21px; padding: 0 0 0 1px; border-color: #8f8f8d; border-top: 1px solid #a0a09e; background: linear-gradient(#f6f6f5, #efefed); line-height: 19px; }
.grid thead th:first-child { width: 41px; }
.grid thead th:last-child { width: auto; border-right: none; }
.grid thead th.on { background: linear-gradient(#f0a189 50%, #e46c48 50%); color: #fff; font-weight: 700; }
.grid tbody th.on { background: linear-gradient(90deg, #f0a189 50%, #e46c48 50%); color: #fff; font-weight: 700; }
.grid td { height: 17px; padding: 1px 1px 0; border: solid #bbb; border-width: 0 1px 1px 0; font: 13px/15px 'Liberation Sans', sans-serif; color: #111; white-space: nowrap; }
.grid td:last-child { border-right: none; }
.grid td.n { text-align: right; }
.typo { text-decoration: underline wavy #c22 1px; text-underline-offset: 0; text-decoration-skip-ink: none; }
.cursor { display: inline-block; width: 1px; height: 14px; background: #000; vertical-align: top; }
.ibeam { position: absolute; left: 322px; top: 23px; }
.vscroll { width: 8px; padding-top: 1px; }
.vscroll i { display: block; width: 7px; height: 4px; margin-bottom: 3px; background: #222; border: solid #b0b0ae; border-width: 1px 0 2px; }
.vscroll span { display: block; height: 389px; background: #e8866c; }
.hscroll { display: flex; justify-content: space-between; height: 7px; padding-right: 8px; }
.hscroll span { width: 882px; background: #e8866c; }
.hscroll i { width: 5px; background: #222; border: solid #b0b0ae; border-width: 0 2px; }
.sidebar { display: flex; align-items: center; width: 8px; margin: 2px 0; border: 1px solid #b5b5b3; border-right: none; background: #f6f5f4; }
.sidebar button { width: 7px; height: 73px; background: #8e8e8c; }
.sidebar button::before { content: ''; border: 4px solid transparent; border-right: 5px solid #fff; border-left: none; }

.tabs { display: flex; height: 20px; padding-left: 7px; font-size: 13px; line-height: 18px; }
.tabs svg { width: 10px; height: 10px; fill: #3f3f3f; }
.nav { width: 19px; }
.tabs .add { width: 36px; }
.tabs .add svg { width: 12px; height: 12px; }
.tab { padding-bottom: 1px; border: solid #8b8b89; border-width: 0 1px 1px 0; }
.tab.suma { width: 55px; border-left-width: 1px; }
.tab.resta { width: 57px; }
.tab.producto { width: 76px; }
.tab.division { width: 69px; }
.tab.current { width: 57px; background: #fff; font-weight: 700; }

/* find bar */
.findbar { display: flex; align-items: center; height: 39px; padding-bottom: 1px; }
.findbar .close { margin-left: 5px; }
.search { width: 248px; margin-left: 6px; }
.search input::placeholder { color: #8b8b89; opacity: 1; }
.faint { width: 30px; opacity: 0.2; }
.find-all { width: 68px; margin: 0 10px; font-size: 12px; color: #8b8b89; white-space: nowrap; }
.findbar label { display: flex; align-items: center; gap: 6px; white-space: nowrap; }
.findbar label.formatted { width: 162px; }
.findbar label.case { width: 262px; }
.findbar input[type=checkbox] { appearance: none; width: 14px; height: 14px; border: 1px solid #a9a9a7; border-radius: 3px; background: #fafafa; }

.statusbar { display: grid; grid-template-columns: 264px 349px 285px 358px 30px 29px 29px 1fr 143px 52px; align-items: center; height: 21px; border-top: 1px solid #b0b0ae; font-size: 12px; }
.statusbar > span { display: flex; align-items: center; height: 16px; padding-left: 8px; border-right: 1px solid #9b9b99; white-space: nowrap; }
.statusbar > span:last-child { border-right: none; }
.statusbar > span.center { justify-content: center; padding: 0; }
.statusbar > span.language { padding-right: 66px; }
.statusbar > span:first-child { padding-left: 10px; }
.zoom button { width: 14px; font-size: 16px; line-height: 16px; }
.zoom input { appearance: none; width: 98px; height: 2px; margin: 0 3px; background: #a9a9a7; }
.zoom input::-webkit-slider-thumb { appearance: none; width: 9px; height: 9px; border: 1px solid #888; border-radius: 50%; background: #fff; }
```
FILE: sheet.js
```js
const COLS = 'ABCDEFGHIJKLMNOPQRSTUV'.split('');
const ROW_COUNT = 46;
const values = [[30, 2], [200, 20], [22, 1], [400, 24], [100, 80], [500, 12], [35, 10]];
const labels = ['A', '<span class="typo">B</span>', 'A+<span class="typo">B</span>', 'A-B<span class="cursor"></span>'];

let head = '<th></th>';
for (const c of COLS) {
    head += `<th${c === 'D' ? ' class="on"' : ''}>${c}</th>`;
}
document.getElementById('cols').innerHTML = head + '<th></th>';

let body = '';
for (let r = 1; r <= ROW_COUNT; r++) {
    body += `<tr><th${r === 1 ? ' class="on"' : ''}>${r}</th>`;
    for (let c = 0; c <= COLS.length; c++) {
        if (r === 1) {
            body += `<td>${labels[c] || ''}</td>`;
        } else {
            const row = values[r - 2] || [];
            body += `<td class="n">${row[c] || ''}</td>`;
        }
    }
    body += '</tr>';
}
document.getElementById('rows').innerHTML = body;
```
